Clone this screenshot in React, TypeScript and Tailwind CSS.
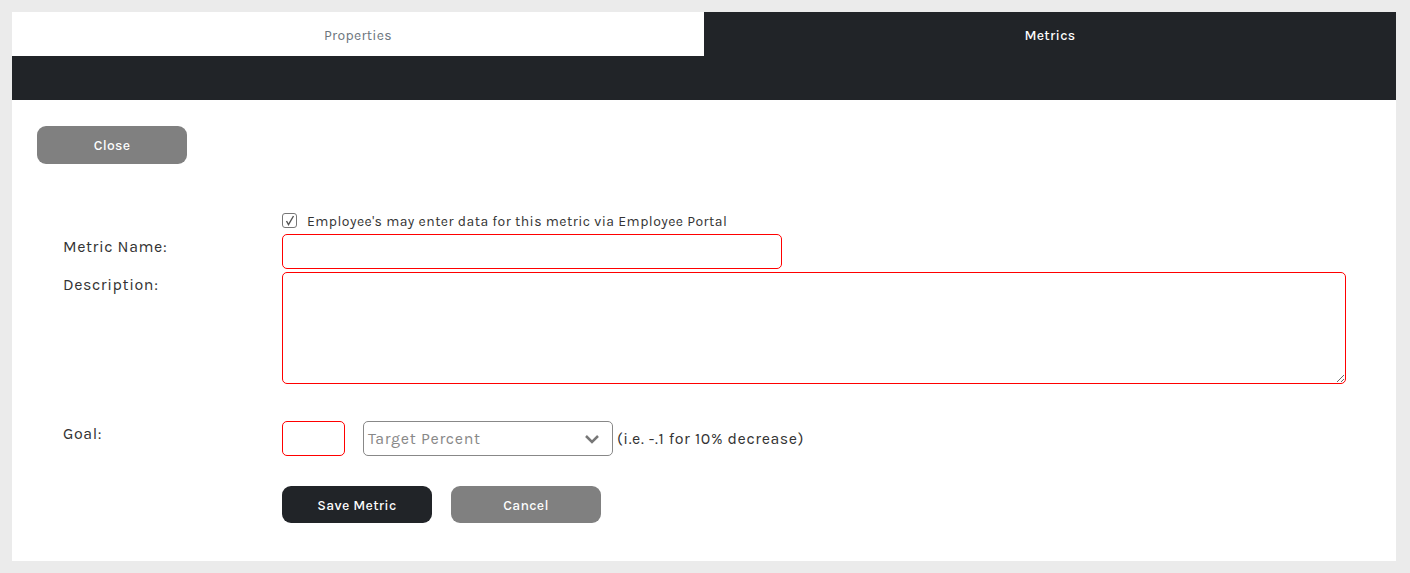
import React from "react";

export default function App() {
  const font = { fontFamily: "Karla, 'Open Sans', 'Liberation Sans', sans-serif" };
  return (
    <div className="w-[1410px] h-[573px] bg-[#ebebeb] pt-[12px] pl-[12px]" style={font}>
      <div className="w-[1384px] h-[549px] bg-white flex flex-col">
        <div className="flex h-[44px]">
          <div className="w-[692px] flex items-center justify-center pt-[2px] text-[14px] tracking-[0.3px] text-[#6c757d]">Properties</div>
          <div className="flex-1 bg-[#212428] flex items-center justify-center pt-[2px] text-[14px] tracking-[0.3px] font-medium text-white">Metrics</div>
        </div>
        <div className="h-[44px] bg-[#212428]"></div>
        <div className="pl-[25px] pt-[26px]">
          <button className="w-[150px] h-[38px] rounded-[9px] bg-[#808080] text-white text-[14px] font-medium tracking-[0.3px] pt-[1px]">Close</button>
        </div>
        <div className="pl-[51px] pt-[48px] text-[#333]">
          <div className="flex">
            <div className="w-[219px]"></div>
            <label className="flex items-center gap-[10px] h-[16px] text-[14px] tracking-[0.45px] text-[#333]">
              <span className="w-[15px] h-[15px] border border-[#777] rounded-[3px] flex items-center justify-center">
                <svg width="11" height="11" viewBox="0 0 11 11"><path d="M2.5 6 L4.5 9.5 L9.5 1" fill="none" stroke="#555" strokeWidth="1.4" /></svg>
              </span>
              <span className="pt-[3px]">Employee's may enter data for this metric via Employee Portal</span>
            </label>
          </div>
          <div className="flex mt-[6px]">
            <div className="w-[219px] pt-[1px] text-[16px] tracking-[0.6px]">Metric Name:</div>
            <div className="w-[500px] h-[35px] border border-[#ff0000] rounded-[5px]"></div>
          </div>
          <div className="flex mt-[3px]">
            <div className="w-[219px] pt-[1px] text-[16px] tracking-[0.6px]">Description:</div>
            <textarea className="w-[1064px] h-[112px] border border-[#ff0000] rounded-[5px] outline-none"></textarea>
          </div>
          <div className="flex mt-[37px] items-start">
            <div className="w-[219px] pt-[1px] text-[16px] tracking-[0.6px]">Goal:</div>
            <div className="w-[63px] h-[35px] border border-[#ff0000] rounded-[5px]"></div>
            <div className="ml-[18px] w-[250px] h-[35px] border border-[#888] rounded-[5px] flex items-center justify-between pl-[4px] pr-[12px]">
              <span className="text-[16px] tracking-[0.7px] text-[#888]">Target Percent</span>
              <svg width="16" height="10" viewBox="0 0 16 10"><path d="M2 2 L8 8 L14 2" fill="none" stroke="#777" strokeWidth="2.5" /></svg>
            </div>
            <div className="ml-[4px] h-[35px] flex items-center text-[16px] tracking-[0.6px] text-[#333]">(i.e. -.1 for 10% decrease)</div>
          </div>
          <div className="flex mt-[30px]">
            <div className="w-[219px]"></div>
            <button className="w-[150px] h-[37px] rounded-[9px] bg-[#212428] text-white text-[14px] font-medium tracking-[0.3px] pt-[1px]">Save Metric</button>
            <button className="ml-[19px] w-[150px] h-[37px] rounded-[9px] bg-[#808080] text-white text-[14px] font-medium tracking-[0.3px] pt-[1px]">Cancel</button>
          </div>
        </div>
      </div>
    </div>
  );
}
